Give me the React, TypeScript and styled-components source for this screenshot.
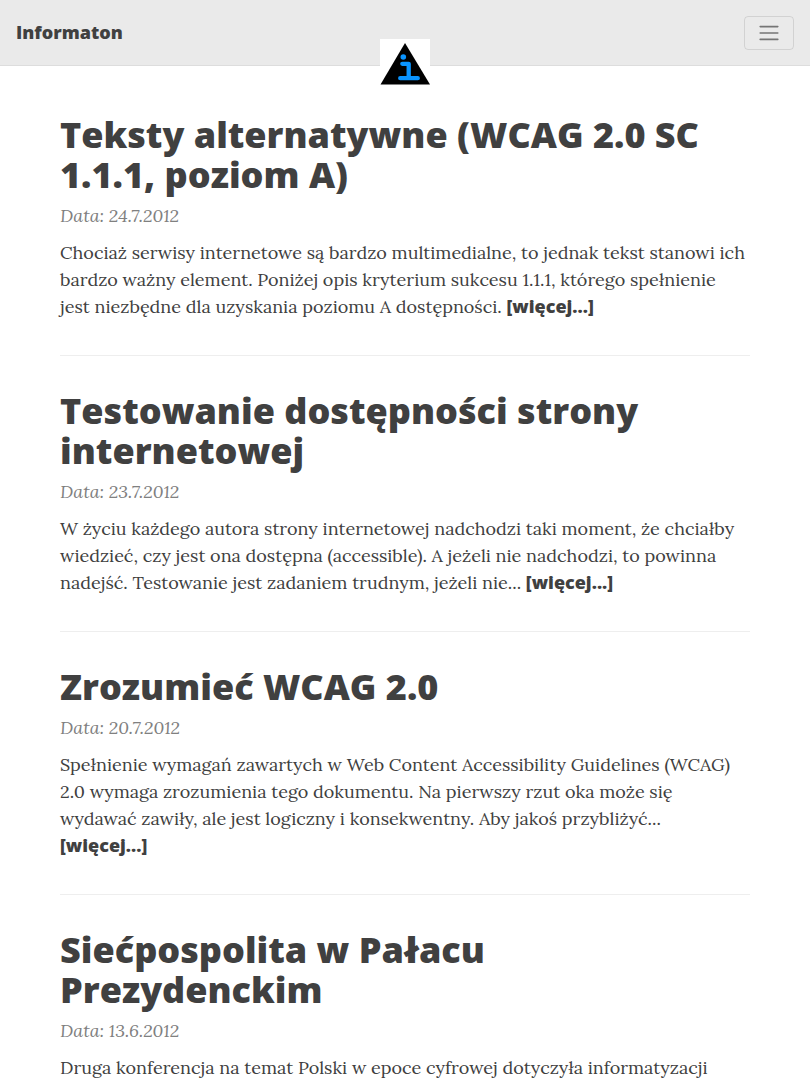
import React from "react";
import styled, { createGlobalStyle } from "styled-components";

const sans = `"Open Sans", "Helvetica Neue", "Liberation Sans", sans-serif`;
const serif = `Lora, "Liberation Serif", "Times New Roman", serif`;

const GlobalStyle = createGlobalStyle`
  *, *::before, *::after { box-sizing: border-box; }
  body {
    margin: 0;
    background: #fff;
    color: #404040;
    font-family: ${serif};
    font-size: 18px;
    line-height: 27px;
  }
`;

const Navbar = styled.nav`
  position: relative;
  display: flex;
  align-items: center;
  justify-content: space-between;
  padding: 15px 16px;
  background: #eaeaea;
  border-bottom: 1px solid #ddd;
  min-height: 66px;
`;

const Brand = styled.a`
  color: #404040;
  font-family: ${sans};
  font-size: 18px;
  font-weight: 800;
  text-decoration: none;
`;

const Toggler = styled.button`
  display: flex;
  align-items: center;
  justify-content: center;
  width: 50px;
  height: 34px;
  padding: 0;
  background: transparent;
  border: 1px solid rgba(0, 0, 0, 0.1);
  border-radius: 4px;
  color: rgba(0, 0, 0, 0.5);
  cursor: pointer;
`;

const Avatar = styled.a`
  position: absolute;
  top: 39px;
  left: 50%;
  margin-left: -25px;
  width: 50px;
  height: 46px;

  svg { display: block; }
`;

const Feed = styled.main`
  max-width: 720px;
  margin: 14px auto 0;
  padding: 0 15px;
`;

const Post = styled.article`
  padding: 35px 0;
  border-bottom: 1px solid #eee;
`;

const Title = styled.h2`
  margin: 0;
  font-family: ${sans};
  font-size: 36px;
  font-weight: 800;
  line-height: 40px;
`;

const TitleLink = styled.a`
  color: inherit;
  text-decoration: none;
`;

const Meta = styled.p`
  margin: 7px 0 10px;
  color: #808080;
  font-style: italic;
`;

const Excerpt = styled.p`
  margin: 0;
`;

const ReadMore = styled.a`
  color: #404040;
  font-family: ${sans};
  font-weight: 800;
  line-height: 1;
  text-decoration: none;
`;

const posts = [
  {
    title: "Teksty alternatywne (WCAG 2.0 SC 1.1.1, poziom A)",
    date: "24.7.2012",
    text: "Chociaż serwisy internetowe są bardzo multimedialne, to jednak tekst stanowi ich bardzo ważny element. Poniżej opis kryterium sukcesu 1.1.1, którego spełnienie jest niezbędne dla uzyskania poziomu A dostępności.",
    more: true,
  },
  {
    title: "Testowanie dostępności strony internetowej",
    date: "23.7.2012",
    text: "W życiu każdego autora strony internetowej nadchodzi taki moment, że chciałby wiedzieć, czy jest ona dostępna (accessible). A jeżeli nie nadchodzi, to powinna nadejść. Testowanie jest zadaniem trudnym, jeżeli nie...",
    more: true,
  },
  {
    title: "Zrozumieć WCAG 2.0",
    date: "20.7.2012",
    text: "Spełnienie wymagań zawartych w Web Content Accessibility Guidelines (WCAG) 2.0 wymaga zrozumienia tego dokumentu. Na pierwszy rzut oka może się wydawać zawiły, ale jest logiczny i konsekwentny. Aby jakoś przybliżyć...",
    more: true,
  },
  {
    title: "Siećpospolita w Pałacu Prezydenckim",
    date: "13.6.2012",
    text: "Druga konferencja na temat Polski w epoce cyfrowej dotyczyła informatyzacji",
    more: false,
  },
];

export default function App() {
  return (
    <>
      <GlobalStyle />
      <Navbar>
        <Brand href="#">Informaton</Brand>
        <Avatar href="#" aria-label="Informaton">
          <svg width="50" height="46" viewBox="0 0 50 46" aria-hidden="true">
            <rect width="50" height="46" fill="#fff" />
            <path d="M25 4 L50 45.500 H0.500 Z" fill="#000" />
            <circle cx="23.300" cy="18" r="2.800" fill="#0a94ff" />
            <path d="M22.300 24.800 H28.700 V39 M20.200 39.200 H37.800" fill="none" stroke="#0a94ff" strokeWidth="4.300" strokeLinecap="round" strokeLinejoin="round" />
          </svg>
        </Avatar>
        <Toggler type="button" aria-label="Menu">
          <svg width="24" height="24" viewBox="0 0 30 30" aria-hidden="true">
            <path d="M4 7h22M4 15h22M4 23h22" fill="none" stroke="currentColor" strokeWidth="2" strokeLinecap="round" strokeMiterlimit="10" />
          </svg>
        </Toggler>
      </Navbar>
      <Feed>
        {posts.map((post) => (
          <Post key={post.title}>
            <Title>
              <TitleLink href="#">{post.title}</TitleLink>
            </Title>
            <Meta>Data: {post.date}</Meta>
            <Excerpt>
              {post.text} {post.more && <ReadMore href="#">[więcej...]</ReadMore>}
            </Excerpt>
          </Post>
        ))}
      </Feed>
    </>
  );
}
